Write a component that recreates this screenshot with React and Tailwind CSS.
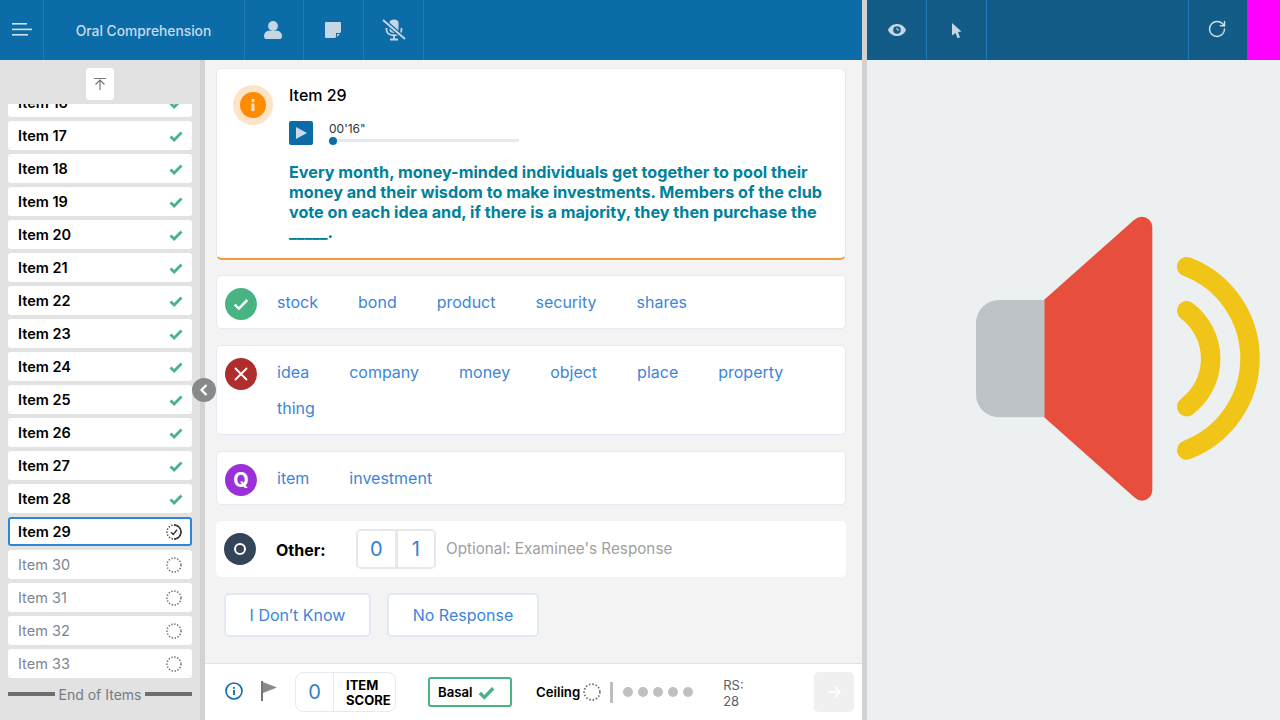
import { RotateCw } from "lucide-react";

const FONT = "font-['Inter','Liberation_Sans',sans-serif]";

const doneItems = [16, 17, 18, 19, 20, 21, 22, 23, 24, 25, 26, 27, 28];
const todoItems = [30, 31, 32, 33];

function DottedCircle({ size = 16, color = "#6b6b6b", width = 1.5 }) {
  return (
    <svg width={size} height={size} viewBox="0 0 16 16" fill="none">
      <circle cx="8" cy="8" r="7" stroke={color} strokeWidth={width} strokeDasharray="1.4 1.6" />
    </svg>
  );
}

function Check({ className = "w-[14px] h-[14px]", color = "#48b484", weight = 2.8 }) {
  return (
    <svg className={className} viewBox="0 0 14 14" fill="none">
      <path d="M1.5 7.5 L5.2 11 L12.5 3.5" stroke={color} strokeWidth={weight} />
    </svg>
  );
}

function HeaderCell({ className = "", children }) {
  return (
    <div className={`h-full flex items-center justify-center border-r border-[#1f7cb8] ${className}`}>
      {children}
    </div>
  );
}

function Header() {
  return (
    <div className="h-[60px] flex shrink-0">
      <div className="w-[862px] bg-[#0b6ca8] flex pl-[1px]">
        <HeaderCell className="w-[43px]">
          <svg width="20" height="14" viewBox="0 0 20 14" fill="#d3e0ea">
            <rect x="0" y="0" width="15" height="1.6" />
            <rect x="0" y="5.6" width="20" height="1.6" />
            <rect x="0" y="11" width="16" height="1.6" />
          </svg>
        </HeaderCell>
        <HeaderCell className="w-[201px] text-[13.8px] font-medium text-[#c9dae8] pr-[1px] pt-[2px]">
          Oral Comprehension
        </HeaderCell>
        <HeaderCell className="w-[59px] pr-[2px]">
          <svg width="18" height="18" viewBox="0 0 18 18" fill="#c6d6e4">
            <circle cx="9" cy="5" r="4.9" />
            <path d="M0 15.5 C0 11.5 3 9.8 5 9.8 H13 C15 9.8 18 11.5 18 15.5 C18 17 17 18 16 18 H2 C1 18 0 17 0 15.5 Z" />
          </svg>
        </HeaderCell>
        <HeaderCell className="w-[60px] pr-[2px]">
          <svg width="16" height="16" viewBox="0 0 16 16">
            <path d="M0 1 Q0 0 1 0 H15 Q16 0 16 1 V10 L10 16 H1 Q0 16 0 15 Z" fill="#c6d6e4" />
            <path d="M11 11 H16 L11 16 Z" fill="#0b6ca8" />
            <path d="M12 12 H15 L12 15 Z" fill="#c6d6e4" />
          </svg>
        </HeaderCell>
        <HeaderCell className="w-[60px]">
          <svg width="24" height="22" viewBox="0 0 24 22" fill="none">
            <path d="M7.5 3.5 C7.5 -0.5 16.5 -0.5 16.5 3.5 V11 C16.5 15 7.5 15 7.5 11 Z" fill="#c6d6e4" />
            <path d="M4.5 9 V11 C5 18 19 18 19.5 11 V9" stroke="#c6d6e4" strokeWidth="1.8" />
            <path d="M12 16 V20 M8 20.5 H16" stroke="#c6d6e4" strokeWidth="1.8" />
            <path d="M1 1 L23 20" stroke="#0b6ca8" strokeWidth="4.5" />
            <path d="M1 1 L23 20" stroke="#c6d6e4" strokeWidth="2" />
          </svg>
        </HeaderCell>
      </div>
      <div className="w-[5px] bg-[#d2d2d2]" />
      <div className="flex-1 bg-[#135c88] flex">
        <HeaderCell className="w-[60px]">
          <svg width="18" height="12" viewBox="0 0 18 12">
            <path d="M0 6 C3.5 -2 14.5 -2 18 6 C14.5 14 3.5 14 0 6 Z" fill="#c6d6e4" />
            <circle cx="9" cy="6" r="3.8" fill="#135c88" />
            <path d="M9 3.6 V6 H11.2" stroke="#c6d6e4" strokeWidth="1" fill="none" />
          </svg>
        </HeaderCell>
        <HeaderCell className="w-[60px]">
          <svg width="10" height="15" viewBox="0 0 10 15" fill="#c6d6e4">
            <path d="M0 0 L9.5 8.6 L6 9 L8 14.4 L5.4 15 L3.6 10 L0 12.6 Z" />
          </svg>
        </HeaderCell>
        <div className="flex-1 h-full" />
        <div className="w-[60px] h-full flex items-center justify-center border-x border-[#1f7cb8] pr-[2px] pb-[2px]">
          <RotateCw size={20} strokeWidth={1.7} className="text-[#d3e0ea]" />
        </div>
        <div className="w-[32px] h-full bg-[#ff00ff]" />
      </div>
    </div>
  );
}

function SideRow({ label, state }) {
  const box =
    state === "current"
      ? "border-2 border-[#2a88d8] pl-[8px] pr-[8px] font-semibold text-black"
      : state === "done"
      ? "pl-[10px] pr-[10px] font-semibold text-black"
      : "pl-[10px] pr-[10px] text-[#7d8590]";
  return (
    <div className={`h-[29px] shrink-0 bg-white rounded-[3px] flex items-center justify-between text-[14.5px] ${box}`}>
      <span>{label}</span>
      {state === "done" && <Check className="w-[14px] h-[14px] mr-[-1px]" />}
      {state === "todo" && <DottedCircle />}
      {state === "current" && (
        <svg width="16" height="16" viewBox="0 0 16 16" fill="none">
          <circle cx="8" cy="8" r="7" stroke="#444" strokeWidth="1.5" strokeDasharray="1.4 1.6" />
          <path d="M8 1 A7 7 0 0 1 8 15" stroke="#333" strokeWidth="1.5" />
          <path d="M5 8.2 L7.3 10.4 L11 5.8" stroke="#333" strokeWidth="1.4" />
        </svg>
      )}
    </div>
  );
}

function Sidebar() {
  return (
    <div className="w-[205px] shrink-0 bg-[#e2e2e2] border-r-[5px] border-[#d2d2d2] flex flex-col relative">
      <div className="h-[44px] shrink-0 pt-[8px] flex justify-center">
        <div className="w-[28px] h-[32px] bg-white rounded-[3px] flex items-center justify-center">
          <svg width="14" height="14" viewBox="0 0 14 14" fill="none" stroke="#777" strokeWidth="1.2">
            <path d="M1 1.5 H13 M7 13 V3 M2.5 7.5 L7 3 L11.5 7.5" />
          </svg>
        </div>
      </div>
      <div className="flex-1 min-h-0 overflow-hidden px-[8px]">
        <div className="flex flex-col gap-[4px] mt-[-16px]">
          {doneItems.map((n) => (
            <SideRow key={n} label={`Item ${n}`} state="done" />
          ))}
          <SideRow label="Item 29" state="current" />
          {todoItems.map((n) => (
            <SideRow key={n} label={`Item ${n}`} state="todo" />
          ))}
          <div className="h-[24px] shrink-0 flex items-center gap-[4px] text-[14px] text-[#757b84]">
            <div className="flex-1 h-[4px] bg-[#6d6d6d]" />
            <span>End of Items</span>
            <div className="flex-1 h-[4px] bg-[#6d6d6d]" />
          </div>
        </div>
      </div>
      <div className="absolute left-[192px] top-[318px] w-[24px] h-[24px] rounded-full bg-[#888a8a] flex items-center justify-center z-10">
        <svg width="10" height="12" viewBox="0 0 10 12" fill="none" stroke="white" strokeWidth="2.2">
          <path d="M7.5 1 L2.5 6 L7.5 11" />
        </svg>
      </div>
    </div>
  );
}

function Badge({ color, children }) {
  return (
    <div className="w-[32px] h-[32px] rounded-full flex items-center justify-center shrink-0" style={{ backgroundColor: color }}>
      {children}
    </div>
  );
}

function AnswerCard({ badge, color, words, className = "" }) {
  return (
    <div className={`bg-white border border-[#e6e8f4] rounded-[5px] flex items-start pl-[8px] pr-[10px] pt-[12px] ${className}`}>
      <Badge color={color}>{badge}</Badge>
      <div className="flex flex-wrap gap-x-[40px] pl-[20px] text-[16px] leading-[36px] -mt-[4px] text-[#3d85d8]">
        {words.map((w) => (
          <span key={w}>{w}</span>
        ))}
      </div>
    </div>
  );
}

function Question() {
  return (
    <div className="h-[192px] bg-white border border-[#e6e8f0] border-b-2 border-b-[#f79a3a] rounded-[6px] flex pl-[16px] pt-[16px]">
      <div className="w-[40px] h-[40px] rounded-full bg-[#fde4c8] flex items-center justify-center shrink-0">
        <div className="w-[26px] h-[26px] rounded-full bg-[#ff8c00] flex items-center justify-center">
          <svg width="4" height="12" viewBox="0 0 4 12" fill="#fde4c8">
            <rect x="0.5" y="0" width="3" height="3" rx="1" />
            <rect x="0.5" y="4.5" width="3" height="7.5" rx="0.5" />
          </svg>
        </div>
      </div>
      <div className="pl-[16px] w-[560px]">
        <div className="text-[16px] font-medium text-black leading-[20px]">Item 29</div>
        <div className="flex mt-[16px]">
          <div className="w-[24px] h-[24px] bg-[#0b6ca8] rounded-[2px] flex items-center justify-center">
            <svg width="11" height="12" viewBox="0 0 11 12" fill="#c9dae8">
              <path d="M0 0 L11 6 L0 12 Z" />
            </svg>
          </div>
          <div className="pl-[16px]">
            <div className="pt-[1px] text-[12px] leading-[14px] text-[#333]">00'16"</div>
            <div className="w-[190px] h-[3px] mt-[3px] bg-[#e4e8f0] relative">
              <div className="absolute left-0 top-[-2.5px] w-[8px] h-[8px] rounded-full bg-[#0b6ca8]" />
            </div>
          </div>
        </div>
        <p className="mt-[17px] text-[16.2px] font-bold leading-[20px] text-[#00819b]">
          Every month, money-minded individuals get together to pool their money and their wisdom to make investments. Members of the club vote on each idea and, if there is a majority, they then purchase the
          <br />
          _____.
        </p>
      </div>
    </div>
  );
}

function Other() {
  return (
    <div className="h-[56px] mt-[16px] bg-white rounded-[5px] flex items-center pl-[8px]">
      <Badge color="#34455a">
        <div className="w-[12px] h-[12px] rounded-full border-[2.5px] border-white" />
      </Badge>
      <span className="ml-[20px] w-[80px] pt-[2px] text-[16px] font-bold text-black">Other:</span>
      <div className="w-[80px] h-[40px] flex border-2 border-[#e8e8e8] rounded-[5px] text-[20px] text-[#2f80d0]">
        <div className="flex-1 flex items-center justify-center border-r-[3px] border-[#e8e8e8]">0</div>
        <div className="flex-1 flex items-center justify-center">1</div>
      </div>
      <span className="ml-[10px] text-[15.25px] text-[#a0a0a0]">Optional: Examinee's Response</span>
    </div>
  );
}

function Footer() {
  return (
    <div className="h-[57px] shrink-0 bg-white border-t border-[#e2e2e2] flex items-center pl-[20px] text-black">
      <svg className="mb-[2px]" width="18" height="18" viewBox="0 0 18 18" fill="none">
        <circle cx="9" cy="9" r="8" stroke="#0b6ca8" strokeWidth="1.6" />
        <rect x="8.1" y="8" width="1.8" height="5" fill="#0b6ca8" />
        <rect x="8.1" y="5" width="1.8" height="1.8" fill="#0b6ca8" />
      </svg>
      <svg className="ml-[18px] mb-[2px]" width="16" height="20" viewBox="0 0 16 20" fill="#777">
        <rect x="0" y="0" width="2" height="20" />
        <path d="M2 1 L16 6.5 L2 12 Z" fill="#8a8a8a" />
      </svg>
      <div className="ml-[18px] w-[101px] h-[40px] flex items-center border border-[#e6e8f4] rounded-[8px]">
        <div className="w-[38px] h-full flex items-center justify-center border-r border-[#e6e8f4] text-[20px] text-[#2f80d0]">0</div>
        <div className="pl-[12px] pt-[2px] text-[13px] leading-[15px] font-bold">
          ITEM
          <br />
          SCORE
        </div>
      </div>
      <div className="ml-[32px] w-[84px] h-[30px] border-2 border-[#48b484] rounded-[3px] flex items-center pl-[8px] gap-[5px] text-[13.2px] font-semibold">
        <span className="pt-[2px]">Basal</span>
        <Check className="w-[17px] h-[17px]" />
      </div>
      <span className="ml-[24px] pt-[2px] text-[13.2px] font-semibold">Ceiling</span>
      <span className="ml-[3px] flex">
        <DottedCircle size={18} />
      </span>
      <div className="ml-[9px] w-[3px] h-[21px] bg-[#bdbdbd]" />
      <div className="ml-[10px] flex gap-[5px]">
        {[0, 1, 2, 3, 4].map((i) => (
          <div key={i} className="w-[10px] h-[10px] rounded-full bg-[#c0c0c0]" />
        ))}
      </div>
      <div className="ml-[30px] w-[91px] pt-[2px] text-[13px] leading-[16px] text-[#5a6068]">
        RS:
        <br />
        28
      </div>
      <div className="w-[40px] h-[40px] rounded-[5px] bg-[#f0f0f0] flex items-center justify-center">
        <svg width="14" height="14" viewBox="0 0 14 14" fill="none" stroke="white" strokeWidth="1.5">
          <path d="M1 7 H13 M8 2 L13 7 L8 12" />
        </svg>
      </div>
    </div>
  );
}

function Speaker() {
  return (
    <svg width="320" height="320" viewBox="0 0 320 320" fill="none">
      <path d="M85 100 H39 A23 23 0 0 0 16 123 V194 A23 23 0 0 0 39 217.3 H85 Z" fill="#bdc3c7" />
      <path d="M84.5 99.5 L174 20 Q178 16.7 182 16.7 A10.5 10.5 0 0 1 192.3 27 V290 A10.5 10.5 0 0 1 182 300.7 Q178 300.7 174 297 L84.5 217.5 Z" fill="#e74e3c" />
      <path d="M226.7 66.7 A98 98 0 0 1 226.7 250" stroke="#f1c518" strokeWidth="19.5" strokeLinecap="round" />
      <path d="M226.7 110.7 A60 60 0 0 1 226.7 206.7" stroke="#f1c518" strokeWidth="19.5" strokeLinecap="round" />
    </svg>
  );
}

export default function App() {
  return (
    <div className={`w-[1280px] h-[720px] overflow-hidden flex flex-col ${FONT}`}>
      <Header />
      <div className="flex-1 flex min-h-0">
        <Sidebar />
        <div className="w-[657px] shrink-0 bg-[#f3f3f3] flex flex-col">
          <div className="flex-1 pl-[11px] pr-[16px] pt-[8px]">
            <Question />
            <AnswerCard
              className="h-[54px] mt-[15px]"
              color="#48b484"
              badge={<Check className="w-[16px] h-[16px]" color="white" weight={2.2} />}
              words={["stock", "bond", "product", "security", "shares"]}
            />
            <AnswerCard
              className="h-[90px] mt-[16px]"
              color="#b02d2d"
              badge={
                <svg width="14" height="14" viewBox="0 0 14 14" stroke="white" strokeWidth="1.8">
                  <path d="M1 1 L13 13 M13 1 L1 13" />
                </svg>
              }
              words={["idea", "company", "money", "object", "place", "property", "thing"]}
            />
            <AnswerCard
              className="h-[54px] mt-[16px]"
              color="#9b30d9"
              badge={<span className="text-[20px] font-bold text-white leading-none">Q</span>}
              words={["item", "investment"]}
            />
            <Other />
            <div className="flex gap-[16px] mt-[16px] pl-[8px]">
              <button className="w-[147px] h-[44px] bg-white border-2 border-[#e2e8f4] rounded-[5px] text-[16px] text-[#3d85d8]">
                I Don’t Know
              </button>
              <button className="w-[152px] h-[44px] bg-white border-2 border-[#e2e8f4] rounded-[5px] text-[16px] text-[#3d85d8]">
                No Response
              </button>
            </div>
          </div>
          <Footer />
        </div>
        <div className="w-[5px] bg-[#d2d2d2]" />
        <div className="flex-1 bg-[#ecf0f1] pt-[140px] pl-[93px]">
          <Speaker />
        </div>
      </div>
    </div>
  );
}
